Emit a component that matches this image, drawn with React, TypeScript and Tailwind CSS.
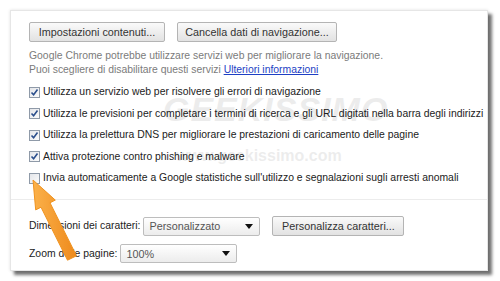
import React from "react";

const checks = [
  { label: "Utilizza un servizio web per risolvere gli errori di navigazione", on: true },
  { label: "Utilizza le previsioni per completare i termini di ricerca e gli URL digitati nella barra degli indirizzi", on: true },
  { label: "Utilizza la prelettura DNS per migliorare le prestazioni di caricamento delle pagine", on: true },
  { label: "Attiva protezione contro phishing e malware", on: true },
  { label: "Invia automaticamente a Google statistiche sull'utilizzo e segnalazioni sugli arresti anomali", on: false },
];

function Button({ children, className = "" }: { children: React.ReactNode; className?: string }) {
  return (
    <div
      className={`h-[20px] flex items-center justify-center whitespace-nowrap border border-[#b4b4b4] rounded-[2px] bg-gradient-to-b from-[#fafafa] to-[#e2e2e2] text-[#333] ${className}`}
    >
      {children}
    </div>
  );
}

function Select({ value, className = "" }: { value: string; className?: string }) {
  return (
    <div
      className={`h-[19px] flex items-center justify-between pl-[5px] pr-[6px] border border-[#bdbdbd] rounded-[2px] bg-gradient-to-b from-[#ffffff] to-[#ececec] text-[#555] ${className}`}
    >
      <span>{value}</span>
      <svg width="8" height="5" viewBox="0 0 8 5">
        <path d="M0 0 H8 L4 5 Z" fill="#111" />
      </svg>
    </div>
  );
}

function Checkbox({ on }: { on: boolean }) {
  return (
    <div className="w-[11px] h-[11px] border border-[#8f9aa8] bg-gradient-to-br from-[#e4e6ea] to-[#fbfbfb] flex items-center justify-center shrink-0">
      {on && (
        <svg width="9" height="9" viewBox="0 0 9 9">
          <path d="M1.5 4.5 L3.6 6.8 L7.5 1.6" stroke="#2c4f8c" strokeWidth="1.6" fill="none" />
        </svg>
      )}
    </div>
  );
}

export default function App() {
  return (
    <div
      className="relative w-[500px] h-[281px] bg-white overflow-hidden text-[10.4px] leading-[14px]"
      style={{ fontFamily: '"Liberation Sans", Arial, sans-serif' }}
    >
      <div className="ml-[10px] mt-[10px] w-[478px] h-[261px] bg-white border border-[#e6e6e6] shadow-[4px_4px_3px_rgba(0,0,0,0.55),0_0_3px_rgba(0,0,0,0.12)] pl-[18px] pt-[11px] flex flex-col">
        <div className="flex gap-[12px] text-[10.8px]">
          <Button className="w-[136px]">Impostazioni contenuti...</Button>
          <Button className="w-[160px]">Cancella dati di navigazione...</Button>
        </div>
        <div className="mt-[7px] text-[#7b7b7b]">
          <div>Google Chrome potrebbe utilizzare servizi web per migliorare la navigazione.</div>
          <div>
            Puoi scegliere di disabilitare questi servizi{" "}
            <span className="text-[#1d3fc4] underline">Ulteriori informazioni</span>
          </div>
        </div>
        <div className="mt-[8px] flex flex-col gap-[7.5px] text-[#222]">
          {checks.map((c) => (
            <div key={c.label} className="flex items-center gap-[3px]">
              <Checkbox on={c.on} />
              <span className="whitespace-nowrap">{c.label}</span>
            </div>
          ))}
        </div>
        <div className="mt-[14px] -ml-[18px] border-t border-[#ececec]" />
        <div className="mt-[16px] flex items-center text-[#222]">
          <span className="whitespace-nowrap">Dimensioni dei caratteri:</span>
          <Select value="Personalizzato" className="ml-[3px] w-[117px] text-[10.8px]" />
          <Button className="ml-[12px] w-[132px] text-[10.8px]">Personalizza caratteri...</Button>
        </div>
        <div className="mt-[8px] flex items-center text-[#222]">
          <span className="whitespace-nowrap">Zoom delle pagine:</span>
          <Select value="100%" className="ml-[3px] w-[117px] text-[10.8px]" />
        </div>
      </div>

      <div className="absolute left-[163px] top-[91px] text-[34px] leading-[36px] font-black italic tracking-[1px] text-[#000] opacity-[0.07] select-none pointer-events-none">
        GEEKISSIMO
      </div>
      <div className="absolute left-[176px] top-[147px] text-[16px] leading-[18px] font-bold text-[#000] opacity-[0.07] select-none pointer-events-none">
        www.geekissimo.com
      </div>

      <svg className="absolute left-0 top-0 pointer-events-none" width="500" height="281" viewBox="0 0 500 281">
        <defs>
          <linearGradient id="arr" x1="0" y1="0" x2="1" y2="0">
            <stop offset="0" stopColor="#fbb14a" />
            <stop offset="1" stopColor="#ee8a1c" />
          </linearGradient>
        </defs>
        <path
          d="M33 180 L55.3 200.1 L50 202.8 L76.5 255.8 L67.5 260.2 L41 207.2 L35.7 209.9 Z"
          fill="url(#arr)"
          stroke="#f0931f"
          strokeWidth="1"
          strokeLinejoin="round"
        />
      </svg>
    </div>
  );
}
